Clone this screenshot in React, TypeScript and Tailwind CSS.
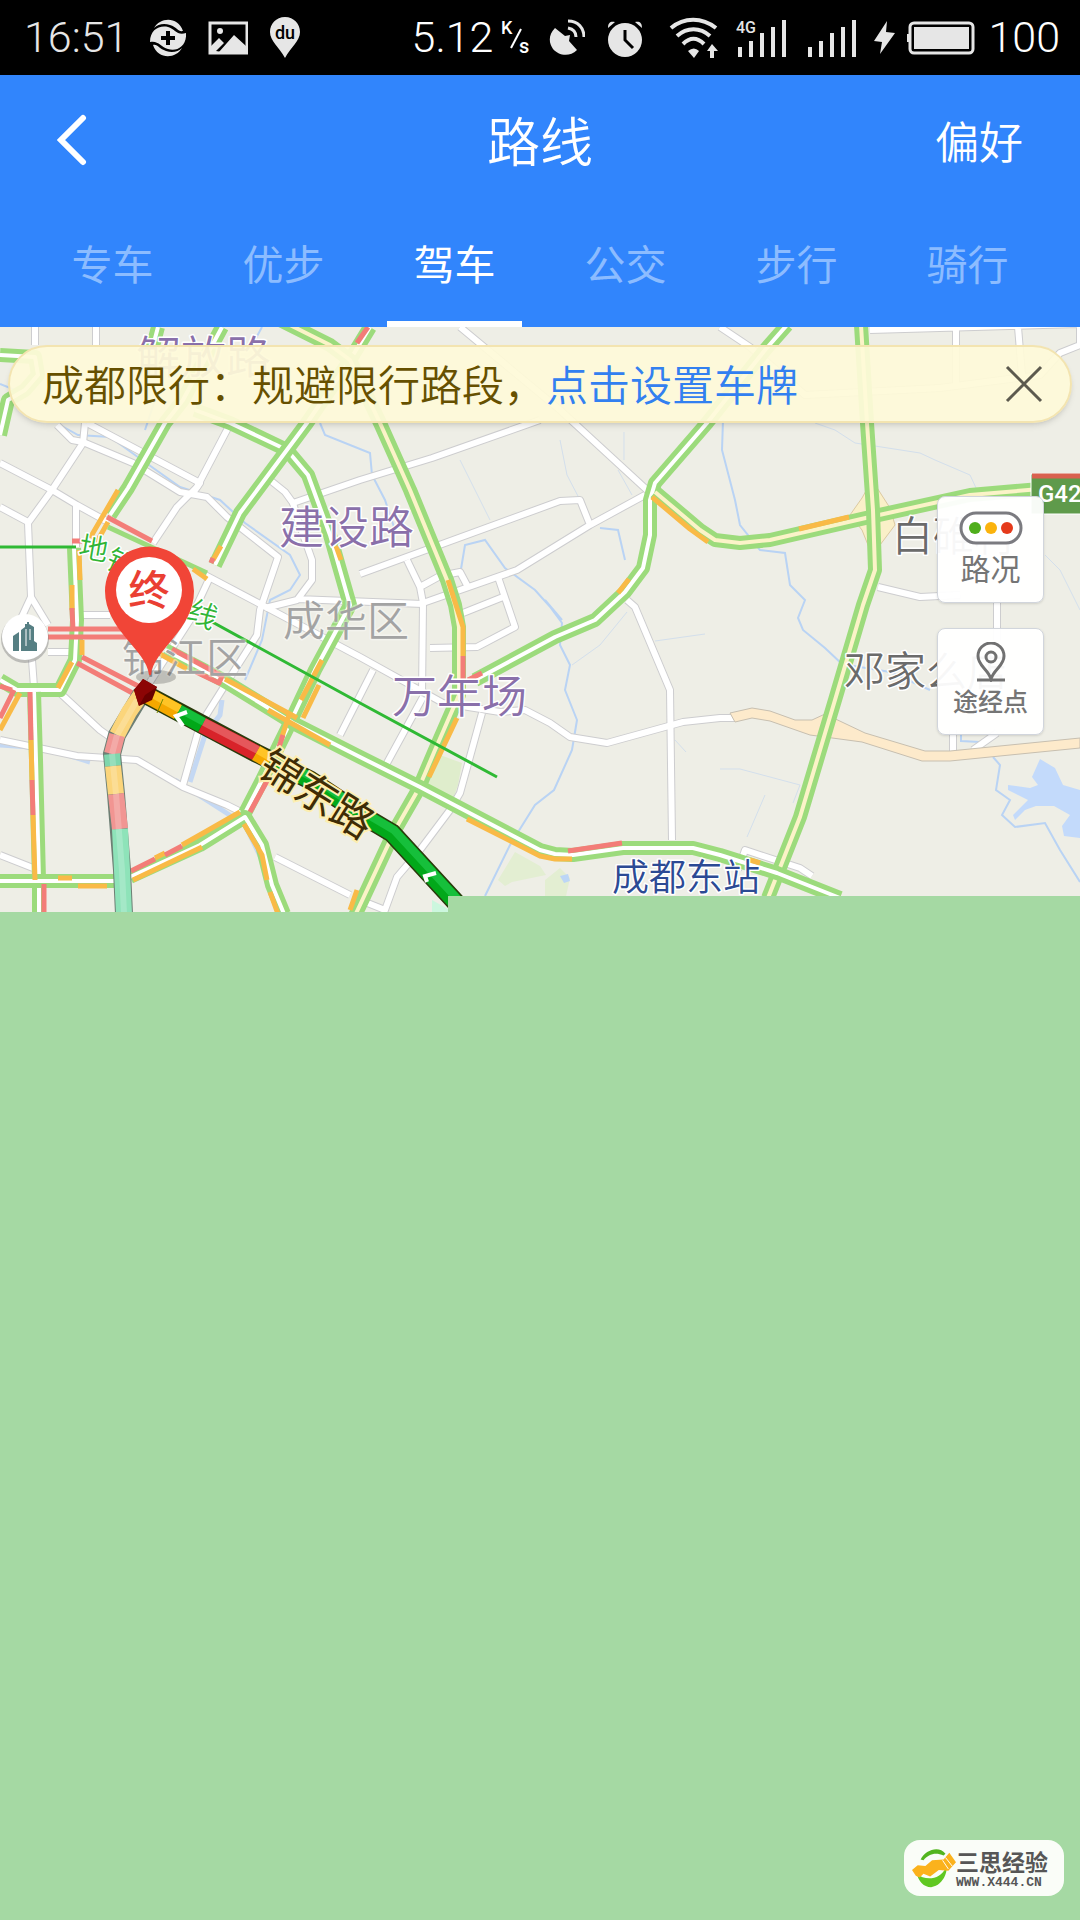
import React, { useState } from "react";

const INK = "#e6e6e6";

const StatusBar: React.FC = () => (
  <div className="flex h-[75px] items-center bg-black pr-[20px] pl-[24px] font-['Roboto',sans-serif] text-[43px] font-light text-[#e6e6e6]">
    <span>16:51</span>
    <svg className="ml-[22px] h-10 w-9" viewBox="0 0 36 40" fill={INK}>
      <path d="M4 10C10 -1 28 -2 33 13C28 14 27 9 20 7C14 5 8 6 4 10ZM32 30C26 41 8 42 3 27C8 26 9 31 16 33C22 35 28 34 32 30Z" />
      <path d="M0 24C0 12 9 7 18 9C25 11 27 18 36 15C37 28 27 34 18 31C11 29 8 22 0 24Z" />
      <path d="M18 13V27M11 20H25" stroke="#000" strokeWidth="4" />
    </svg>
    <svg className="ml-[22px] h-10 w-10" viewBox="0 0 40 40">
      <rect x="2" y="5" width="37" height="30" fill="none" stroke={INK} strokeWidth="3" />
      <circle cx="12" cy="13" r="3" fill={INK} />
      <path d="M2 36V29L11 20L16 25L8 33L11 34L26 17L38 28V36Z" fill={INK} />
    </svg>
    <svg className="ml-[21px] h-[42px] w-[32px]" viewBox="0 0 32 42">
      <path d="M16 0C7 0 1 7 1 15C1 24 10 30 16 41C22 30 31 24 31 15C31 7 25 0 16 0Z" fill={INK} />
      <text x="16" y="22" textAnchor="middle" fontSize="18" fontWeight="500" fill="#000">du</text>
    </svg>
    <span className="ml-auto text-white">5.12</span>
    <svg className="ml-1 h-10 w-9" viewBox="0 0 36 40" fill="#fff">
      <text x="4" y="16" fontSize="18" fontWeight="500">K</text>
      <text x="22" y="35" fontSize="20" fontWeight="500">s</text>
      <path d="M14 30L24 11" stroke="#fff" strokeWidth="2" />
    </svg>
    <svg className="ml-4 h-10 w-9" viewBox="0 0 36 40">
      <path d="M6 10L16 18L21 17L20 23L28 32C20 40 9 37 4 31C-1 24 0 16 6 10Z" fill={INK} />
      <path d="M19 10C24 11 27 14 27 19M19 3C29 3 35 10 35 19" fill="none" stroke={INK} strokeWidth="3" />
    </svg>
    <svg className="ml-[22px] h-10 w-9" viewBox="0 0 36 40">
      <path d="M1 10C1 4 4 3 8 4ZM35 10C35 4 32 3 28 4Z" fill={INK} />
      <circle cx="18" cy="22" r="17" fill={INK} />
      <path d="M18 12V22L26 30" fill="none" stroke="#000" strokeWidth="3" />
    </svg>
    <svg className="ml-[26px] h-[42px] w-[50px]" viewBox="0 0 50 42">
      <g fill="none" stroke={INK} strokeWidth="4">
        <path d="M2 11C15 0 33 0 47 11M8 19C18 10 31 10 41 19M14 27C21 20 28 20 35 27" />
      </g>
      <path d="M19 34Q25 29 30 34L25 41Z" fill={INK} />
      <path d="M38 34L43 27L49 34H45V41H41V34Z" fill={INK} />
    </svg>
    <svg className="ml-[17px] h-[40px] w-[52px]" viewBox="0 0 52 40" fill={INK}>
      <text x="0" y="15" fontSize="16" fontWeight="500">4G</text>
      <path d="M2 29h4v10h-4zM13 23h4v16h-4zM24 15h4v24h-4zM35 9h4v30h-4zM46 2h4v37h-4z" />
    </svg>
    <svg className="ml-[18px] h-[40px] w-[52px]" viewBox="0 0 52 40" fill={INK}>
      <path d="M2 29h4v10h-4zM13 23h4v16h-4zM24 15h4v24h-4zM35 9h4v30h-4zM46 2h4v37h-4z" />
    </svg>
    <svg className="ml-[15px] h-[34px] w-[22px]" viewBox="0 0 22 34">
      <path d="M14 0L1 20L9 21L7 33L22 12L13 11Z" fill={INK} />
    </svg>
    <svg className="ml-3 h-[34px] w-[68px]" viewBox="0 0 68 34">
      <rect x="3" y="2" width="63" height="30" rx="4" fill="none" stroke={INK} strokeWidth="3" />
      <path d="M7 6H62V28H7ZM0 13h3v8h-3z" fill={INK} />
    </svg>
    <span className="ml-[13px] text-white">100</span>
  </div>
);

const tabs = ["专车", "优步", "驾车", "公交", "步行", "骑行"];

const Header: React.FC = () => {
  const [active, setActive] = useState("驾车");
  return (
    <header className="bg-[#3185fc] text-white">
      <div className="grid h-[132px] grid-cols-3 items-center px-[57px] pb-[2px]">
        <button aria-label="返回" className="justify-self-start">
          <svg className="h-[52px] w-8" viewBox="0 0 32 52" fill="none" stroke="#fff" strokeWidth="6" strokeLinecap="round">
            <path d="M26 4L4 26L26 48" />
          </svg>
        </button>
        <h1 className="text-center text-[53px] font-[350]">路线</h1>
        <button className="justify-self-end text-[44px] font-[350]">偏好</button>
      </div>
      <nav className="flex h-[120px] px-[27px]">
        {tabs.map((tab) => (
          <button
            key={tab}
            onClick={() => setActive(tab)}
            className={`flex flex-1 flex-col items-center text-[41px] ${tab === active ? "text-white" : "text-[#8cbcff]"}`}
          >
            <span className="flex flex-1 items-center pb-[3px]">{tab}</span>
            <span className={`h-[6px] w-[135px] ${tab === active ? "bg-white" : ""}`} />
          </button>
        ))}
      </nav>
    </header>
  );
};

const GREEN = "#9cdb7c";
const ORANGE = "#f9ba47";
const RED = "#f37d78";

const rivers = [
  "M0 384L20 392M145 430L155 400M262 327L255 340M320 423L325 435L370 453L372 475L385 500L395 530",
  "M60 425L78 435L110 437L135 455L180 487L220 500L245 523L290 555L300 575L290 590L270 600L262 640L245 680",
  "M460 575L465 545L485 540L505 568L535 590L562 620L545 600L562 623L560 645L570 665L565 690L577 720L572 750L554 790L535 805L510 845L485 896",
  "M723 420L722 450L735 500L740 525L760 550L785 553L790 585L805 600L798 618L803 630L825 648L842 664L890 672L930 690",
  "M600 528L618 530L625 560",
  "M961 735V741L980 742M993 757L1000 765L996 790L1010 800L1002 815L1015 827L1045 823L1060 850L1080 882",
];

const streams = [
  "M618 470L632 495M624 432V460M560 440L567 475L580 500M572 665L600 645L627 612M460 460L490 520",
  "M977 490L970 475L935 460L920 453L875 446L855 443L835 430L815 423M1045 555L1060 570L1080 610",
  "M720 769H740L800 785L793 803M765 795L747 837M675 740L686 752M655 641L705 634",
];

const whiteRoads = [
  "M35 327V345M96 327V345",
  "M57 425L72 440L83 442L133 463L180 492L207 497L227 517L278 557L260 610L257 635L222 690L200 725L183 785",
  "M87 423L200 483L193 493",
  "M85 423L83 443L52 490L28 523L31 597L18 625M31 597L48 625",
  "M0 463L52 490L77 505L108 522M0 507L28 522M76 505V547",
  "M228 428L197 487L177 507L153 543",
  "M270 480L285 492L293 503L360 480L432 458L540 420",
  "M293 503L298 520L312 560L312 580L297 600L265 608M297 599L423 604",
  "M205 575L262 605L360 657L443 703L500 712L525 710L550 723L570 737L607 743L683 722L720 718L735 718",
  "M210 577L190 620L150 682",
  "M460 327L560 410L647 490",
  "M360 574L560 501L580 500L590 525M645 495L590 525L517 570L423 603",
  "M407 560L420 587L423 603L422 695M420 587L440 576L460 572L468 587",
  "M463 613L503 597M498 577L515 627L477 647L430 648",
  "M627 600L635 607L670 690L672 840",
  "M373 670L340 735M423 697L387 763M482 713L460 793L450 810L420 850L397 877L385 910L360 900",
  "M720 327L750 347L805 395L940 388L1040 375L1060 353L1080 345L1080 327M870 330L1080 324M956 327V385M1018 327L1022 375",
  "M878 587L920 597L960 595M997 600V640M953 730V752M973 750L997 733",
  "M0 740L77 756L137 760L183 787L227 805L247 815",
  "M60 693L100 730L110 737M48 652H76M32 660L34 687M82 615H110M0 855L33 868M275 857L350 895",
  "M738 870L745 850L760 855L800 868L812 876",
];

// dual carriageways: [path, median colour]
const mainRoads: [string, string][] = [
  ["M0 355L35 357L38 375L25 390L8 400L0 435", "#fff"],
  ["M158 327L152 350M222 327L183 400L165 423L128 488L110 515", "#fff"],
  ["M195 410L230 423L287 450L308 475L330 535L350 605L315 670L290 723L262 780L245 813", "#fff"],
  ["M370 327L350 360L307 423L240 513L215 565", "#fff"],
  ["M280 320L330 345L350 360L380 423L410 490L447 580L455 605L459 627L459 695L435 750L418 790L395 830L360 905L353 920", "#fbf3c8"],
  ["M787 325L765 350L707 423L655 483L650 500L650 535L643 568L625 592L595 620L555 637L475 680", "#fff"],
  ["M655 492L700 530L715 540L740 543L770 540L870 517L970 495L1040 489L1080 486", "#fbf3c8"],
  ["M861 325L867 423L873 510L875 570L863 605L835 700L800 817L768 898", "#fbf3c8"],
  ["M165 650L223 680L293 723L360 757L420 787L540 850L555 854L573 855L623 848L693 848L720 855L777 873L840 898", "#fff"],
  ["M0 680L17 690L60 690L75 660L77 620L74 548", "#fff"],
  ["M34 692L36 760L39 880V914", "#fff"],
  ["M0 881L118 881", "#fff"],
  ["M130 877L200 845L245 817L262 845L272 885L284 914", "#fff"],
];

// single direction lanes painted over the dual carriageways
const lanes: [string, string][] = [
  [ORANGE, "M118 490L90 538M108 522L95 545"],
  [GREEN, "M108 527L207 573"],
  [ORANGE, "M193 569L207 579"],
  [RED, "M107 517L152 541"],
  [ORANGE, "M221 546L213 560"],
  [RED, "M213 558L211 563M72 541H82"],
  [ORANGE, "M79 550L80 580M336 546L341 560M72 585V610M82 640V655M72 662L58 688"],
  [RED, "M72 608L73 630"],
  [RED, "M48 629H135M48 637H135M82 657L140 687M77 663L138 696"],
  [RED, "M0 686L12 690M14 690L0 718M368 327L357 343"],
  [ORANGE, "M20 693L0 730"],
  [RED, "M30 692L31 740"],
  [ORANGE, "M31 740L32 780M33 815L35 880"],
  [RED, "M32 780L33 815M44 884V914"],
  [ORANGE, "M58 878H72M78 886H107"],
  [ORANGE, "M160 654L187 669M225 679L290 714L297 718M268 710L330 745M322 660L301 700M319 685L303 718M289 715L281 740"],
  [RED, "M172 649L222 676L219 683L196 672M283 735L279 747M267 781L250 812"],
  [ORANGE, "M133 880L202 847M240 812L205 832L182 845M165 853L155 858M244 824L262 855L267 880M270 892L278 914"],
  [RED, "M182 846L165 855M155 859L131 871"],
  [ORANGE, "M448 580L463 627V656M457 718L429 777M357 890L350 910"],
  [RED, "M463 656V682M482 673L468 680"],
  [ORANGE, "M629 579L618 593M652 497L690 529L708 542M799 529L849 517M467 819L540 856L555 859L572 859"],
  [RED, "M568 851L622 843"],
  [ORANGE, "M750 860L760 863"],
];

const route = [
  { d: "M143 693L178 712", dark: "#f5a800", light: "#ffc425" },
  { d: "M178 712L202 725", dark: "#00a818", light: "#16bf3b" },
  { d: "M202 725L256 753", dark: "#d8232a", light: "#e5575b" },
  { d: "M256 753L270 761", dark: "#f5a800", light: "#ffc425" },
  { d: "M270 761L310 780L370 820L392 833L460 907", dark: "#02a81a", light: "#16bf3b" },
];

const altRoute = [
  { d: "M142 693L129 712L117 735", fill: "#fbd57b" },
  { d: "M117 735L112 754", fill: "#f19592" },
  { d: "M112 754L113 766", fill: "#7ed6ac" },
  { d: "M113 766L116 794", fill: "#fbd57b" },
  { d: "M116 794L120 829", fill: "#f19592" },
  { d: "M120 829L122 870L124 914", fill: "#8ee3b9" },
];

const MapCanvas: React.FC = () => (
  <svg className="block w-full font-['Noto_Sans_CJK_SC',sans-serif]" viewBox="0 327 1080 585" fill="none">
    <rect y="327" width="1080" height="585" fill="#eeeee6" />
    <path d="M440 755L462 763L458 785L450 808L432 800L425 785Z" fill="#dfedcc" />
    <path d="M515 852L540 866L546 875L512 882L505 886L498 880ZM545 880L560 868L570 878L566 896H545Z" fill="#e3eed2" />
    <path d="M560 876l8 -2l2 7l-6 2z" fill="#bcd6f6" />
    <g stroke="#b9d3f4" strokeWidth="2">
      {rivers.map((d) => <path key={d} d={d} />)}
    </g>
    <g stroke="#d3dfec" strokeWidth="1">
      {streams.map((d) => <path key={d} d={d} />)}
    </g>
    <path d="M0 745L45 748L90 762M175 780L225 812L240 822M245 825L262 860M222 700L220 715L205 735L190 782" stroke="#c4d8f3" strokeWidth="5" />
    <path d="M1032 777L1040 759L1055 768L1063 785L1080 790V838L1064 836L1062 826L1070 815L1054 806L1036 806L1025 810L1015 820L1013 815L1028 800L1008 790V785L1030 788L1038 785Z" fill="#c3dafb" />
    <g strokeLinejoin="round">
      <g stroke="#cdcdcf" strokeWidth="8">{whiteRoads.map((d) => <path key={d} d={d} />)}</g>
      <g stroke="#fff" strokeWidth="6">{whiteRoads.map((d) => <path key={d} d={d} />)}</g>
    </g>
    <path d="M730 713L752 708L770 711L795 720L812 720L825 714L865 733L925 751L950 751L1080 738V748L950 761L922 761L862 742L810 735L770 721L752 718L735 722Z" fill="#fdeacb" stroke="#c7bfb0" strokeWidth="1" />
    <path d="M862 498L872 480L890 508L895 525L880 545L874 560L862 530L850 515Z" fill="#faf0c8" stroke="#dcc9a0" />
    <g strokeLinejoin="round">
      {mainRoads.map(([d, median]) => (
        <g key={d}>
          <path d={d} stroke={GREEN} strokeWidth="14" />
          <path d={d} stroke={median} strokeWidth="4" />
        </g>
      ))}
      {lanes.map(([color, d]) => <path key={d} d={d} stroke={color} strokeWidth="5" />)}
    </g>
    <path d="M0 547H76M205 618L360 703L497 777" stroke="#2fb934" strokeWidth="3" />

    <g stroke="#fff" strokeWidth="3" paintOrder="stroke" strokeLinejoin="round">
      <g fontSize="45" fill="#8a70aa" fontWeight="350">
        <text x="136" y="374">解放路</text>
        <text x="279" y="544">建设路</text>
        <text x="392" y="713">万年场</text>
      </g>
      <g fontSize="42" fill="#a3a3a3" strokeOpacity="0.4" fontWeight="350">
        <text x="283" y="636">成华区</text>
        <text x="122" y="673">锦江区</text>
      </g>
      <g fontSize="41" fill="#6b6b6b" fontWeight="350">
        <text x="844" y="686">邓家么店</text>
        <text x="892" y="551">白碓村</text>
      </g>
      <text x="612" y="891" fontSize="37" fill="#2c4a94" fontWeight="350">成都东站</text>
      <g fontSize="29" fill="#31b536" fontWeight="350">
        <text x="79" y="559" transform="rotate(10 94 549)">地</text>
        <text x="107" y="573" transform="rotate(24 120 563)">铁</text>
        <text x="188" y="625" transform="rotate(24 203 615)">线</text>
      </g>
    </g>
    <rect x="1031" y="474" width="60" height="40" fill="#5f9a4b" stroke="#fff" />
    <path d="M1032 476H1080" stroke="#d9614f" strokeWidth="5" />
    <text x="1038" y="502" fontSize="24" fontWeight="500" fill="#fff" className="font-['Roboto',sans-serif]">G42</text>

    {/* city landmark */}
    <circle cx="25" cy="639" r="24" fill="#8a8a8a" opacity="0.5" />
    <circle cx="25" cy="637" r="23" fill="#fff" />
    <path d="M13 636L19 632V651H13ZM21 630L25 627V624H27V622H29V624L34 627V641L37 643V651H21Z" fill="#567f83" />
    <path d="M26 629V646M30 629V640" stroke="#fff" strokeWidth="1" />

    <path d="M142 693L117 735L112 754L116 794L122 870L124 914" stroke="#6d7f74" strokeWidth="18" />
    {altRoute.map((s) => <path key={s.d} d={s.d} stroke={s.fill} strokeWidth="16" />)}
    <path d="M137 700L117 735L112 754L116 794L122 870L124 914" stroke="#fff" strokeOpacity="0.2" strokeWidth="6" />

    <path d="M143 693L256 753L310 780L370 820L392 833L460 907" stroke="#2a3a0c" strokeWidth="19" />
    {route.map((s) => <path key={s.d} d={s.d} stroke={s.dark} strokeWidth="16" />)}
    <g transform="translate(2 -3)">
      {route.map((s) => <path key={s.d} d={s.d} stroke={s.light} strokeWidth="8" />)}
    </g>
    <path d="M187 712L176 716L183 726M436 873L425 876L427 882" stroke="#fff" strokeWidth="4" />
    <path d="M157 713L163 699" stroke="#7a8a00" />

    <g fontSize="42" fill="#3f2c05" stroke="#fdeeb0" strokeWidth="4" paintOrder="stroke" transform="rotate(32 256 773)">
      <text x="256" y="774">锦东路</text>
    </g>

    {/* destination */}
    <ellipse cx="156" cy="677" rx="20" ry="7" fill="#000" opacity="0.2" />
    <path d="M143 679L157 687L152 700L139 706L134 690Z" fill="#6a0000" />
    <path d="M143 679L157 687L145 695L139 706L134 690Z" fill="#8c0505" />
    <path d="M149 675C147 650 105 630 105 591A44 44 0 0 1 194 591C194 630 153 650 151 675Z" fill="#f14537" />
    <circle cx="149" cy="590" r="33" fill="#fff" />
    <text x="149" y="605" textAnchor="middle" fontSize="41" fontWeight="500" fill="#ea3f33">终</text>

    <path d="M432 900L448 909V912H432Z" fill="#ccf7de" />
    <path d="M448 896H1080V912H448Z" fill="#a5d9a3" />
  </svg>
);

const mapButton =
  "flex h-[107px] w-[107px] flex-col items-center justify-center rounded-lg border border-gray-300 bg-white/95 text-[#757575] shadow";

const MapPanel: React.FC = () => {
  const [notice, setNotice] = useState(true);
  return (
    <section className="relative">
      <MapCanvas />
      {notice && (
        <div className="absolute inset-x-2 top-[18px] flex h-[78px] items-center rounded-full border-2 border-[#f3e4b0] bg-[#fefad8]/93 pr-[26px] pl-8 text-[42px] font-[350] text-[#665000] shadow-md">
          <p className="pb-1">
            成都限行：规避限行路段，
            <a href="#plate" className="text-[#3280f0]">点击设置车牌</a>
          </p>
          <button aria-label="关闭" className="ml-auto" onClick={() => setNotice(false)}>
            <svg className="h-10 w-10" viewBox="0 0 40 40" stroke="#5c5a4e" strokeWidth="3">
              <path d="M3 3L37 37M37 3L3 37" />
            </svg>
          </button>
        </div>
      )}
      <div className="absolute top-[169px] right-9 flex flex-col gap-[25px]">
        <button className={`${mapButton} pb-1 text-[30px] leading-[44px]`}>
          <svg className="mt-1 h-[34px] w-[64px]" viewBox="0 0 64 34">
            <rect x="2" y="2" width="60" height="30" rx="15" fill="#fff" stroke="#7b7b80" strokeWidth="3" />
            <circle cx="16" cy="17" r="6" fill="#4fae1c" />
            <circle cx="32" cy="17" r="6" fill="#fbb30d" />
            <circle cx="48" cy="17" r="6" fill="#e53a1b" />
          </svg>
          路况
        </button>
        <button className={`${mapButton} pb-2 text-[25px] leading-[36px] font-medium`}>
          <svg className="mt-1 h-[40px] w-[32px]" viewBox="0 0 32 40" fill="none" stroke="#717171" strokeWidth="3">
            <path d="M16 37C13 27 3 24 3 14A13 13 0 0 1 29 14C29 24 19 27 16 37Z" />
            <circle cx="16" cy="15" r="5" />
            <path d="M2 38H30" />
          </svg>
          途经点
        </button>
      </div>
    </section>
  );
};

const Watermark: React.FC = () => (
  <footer className="mt-auto flex justify-end pr-4 pb-6">
    <div className="flex h-14 items-center rounded-2xl bg-[#fafdf8] pr-4 pl-2">
      <svg className="h-11 w-11" viewBox="0 0 46 44">
        <path d="M9 13C14 3 28 -2 35 7L33 9C24 5 17 8 12 14Z" fill="#52b51f" />
        <path d="M5 28C14 36 30 34 35 22C38 18 36 40 20 42C12 42 7 36 5 28Z" fill="#60c822" />
        <path d="M0 24L6 19L14 20L21 14L33 13L39 6L46 16L38 25L28 24L19 31L12 28L8 32L4 30Z" fill="#fbb21c" />
        <path d="M32 14L38 23M35 11L42 20" stroke="#fff" />
      </svg>
      <div className="flex flex-col">
        <span className="text-[23px] leading-[30px] font-bold text-[#565656]">三思经验</span>
        <span className="font-['Liberation_Mono',monospace] text-[13px] leading-[14px] font-bold text-[#565656]">WWW.X444.CN</span>
      </div>
    </div>
  </footer>
);

const App: React.FC = () => (
  <div className="flex min-h-screen flex-col bg-[#a5d9a3] font-['Noto_Sans_CJK_SC',sans-serif]">
    <StatusBar />
    <Header />
    <MapPanel />
    <Watermark />
  </div>
);

export default App;
